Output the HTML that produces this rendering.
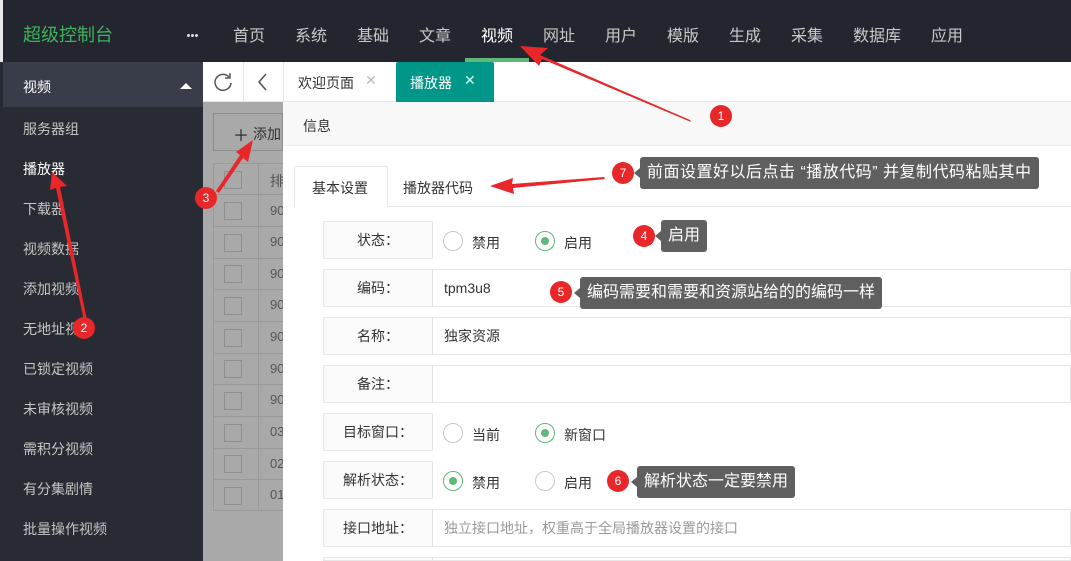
<!DOCTYPE html>
<html style="width:1071px;height:561px;overflow:hidden"><head><meta charset="utf-8"><style>
*{margin:0;padding:0;box-sizing:border-box}
body{width:1071px;height:561px;overflow:hidden;position:relative;background:#fff;font-family:"Liberation Sans","Noto Sans CJK SC",sans-serif;font-size:14px;color:#333}
.a{position:absolute}
.top{left:0;top:0;width:1071px;height:62px;background:#23262e}
.nav{top:22px;color:#c8c8c8;font-size:16px}
.side{left:0;top:62px;width:203px;height:499px;background:#282b33}
.si{left:23px;color:#c5c5c5;font-size:14px}
.gray{left:203px;top:102px;width:80px;height:459px;background:#a9a9a9}
.cb{width:18px;height:18px;border:1px solid #8f8f8f;left:224px}
.rowl{left:213px;width:70px;height:1px;background:#999}
.num{left:270px;color:#555;font-size:13px}
.lab{left:323px;width:110px;height:38px;background:#fafafa;border:1px solid #e6e6e6;text-align:center;line-height:36px;font-size:14px}
.inp{left:432px;width:639px;height:38px;border:1px solid #e6e6e6;border-left:none;line-height:36px;padding-left:12px}
.rad{width:20px;height:20px;border:1px solid #c9c9c9;border-radius:50%;background:#fff}
.rad.on{border-color:#5fb878}
.rad.on:after{content:"";position:absolute;left:5px;top:5px;width:8px;height:8px;border-radius:50%;background:#5fb878}
.badge{width:22px;height:22px;border-radius:50%;background:#e8272a;color:#fff;font-size:12px;text-align:center;line-height:22px}
.tip{background:#5f5f5f;color:#fff;font-size:16px;height:32px;line-height:32px;padding:0 7px;border-radius:3px;white-space:nowrap}
.tip:before{content:"";position:absolute;left:-6px;top:11px;width:0;height:0;border-style:solid;border-color:transparent #5f5f5f transparent transparent;border-width:5px 6px 5px 0}
.dot{width:3px;height:3px;background:#ddd;border-radius:50%;top:34px}
</style></head><body>
<div class="a top"></div>
<div class="a" style="left:0;top:0;width:3px;height:561px;background:#e8e8e8"></div>
<div class="a" style="left:23px;top:21px;color:#3fb25d;font-size:18px">超级控制台</div>
<div class="a dot" style="left:187px"></div><div class="a dot" style="left:191px"></div><div class="a dot" style="left:195px"></div>
<div class="a nav" style="left:233px">首页</div>
<div class="a nav" style="left:295px">系统</div>
<div class="a nav" style="left:357px">基础</div>
<div class="a nav" style="left:419px">文章</div>
<div class="a nav" style="left:481px;color:#fff">视频</div>
<div class="a" style="left:465px;top:58px;width:64px;height:4px;background:#5fb878"></div>
<div class="a nav" style="left:543px">网址</div>
<div class="a nav" style="left:605px">用户</div>
<div class="a nav" style="left:667px">模版</div>
<div class="a nav" style="left:729px">生成</div>
<div class="a nav" style="left:791px">采集</div>
<div class="a nav" style="left:853px">数据库</div>
<div class="a nav" style="left:931px">应用</div>

<div class="a side"></div>
<div class="a" style="left:3px;top:62px;width:200px;height:45px;background:#393d49"></div>
<div class="a si" style="top:77px;color:#fff">视频</div>
<div class="a" style="left:180px;top:83px;width:0;height:0;border-style:solid;border-color:transparent transparent #fff transparent;border-width:0 6px 6px 6px"></div>
<div class="a si" style="top:119px">服务器组</div>
<div class="a si" style="top:159px;color:#fff">播放器</div>
<div class="a si" style="top:199px">下载器</div>
<div class="a si" style="top:239px">视频数据</div>
<div class="a si" style="top:279px">添加视频</div>
<div class="a si" style="top:319px">无地址视频</div>
<div class="a si" style="top:359px">已锁定视频</div>
<div class="a si" style="top:399px">未审核视频</div>
<div class="a si" style="top:439px">需积分视频</div>
<div class="a si" style="top:479px">有分集剧情</div>
<div class="a si" style="top:519px">批量操作视频</div>

<div class="a" style="left:203px;top:62px;width:868px;height:40px;background:#fff;border-bottom:1px solid #e6e6e6"></div>
<div class="a" style="left:243px;top:62px;width:1px;height:40px;background:#e6e6e6"></div>
<div class="a" style="left:283px;top:62px;width:1px;height:40px;background:#e6e6e6"></div>
<svg class="a" style="left:212px;top:71px" width="22" height="22" viewBox="0 0 22 22"><path d="M17 6A8 8 0 1 0 19 12" fill="none" stroke="#555" stroke-width="1.5"/><path d="M18 2v5h-5" fill="none" stroke="#555" stroke-width="1.5"/></svg>
<svg class="a" style="left:255px;top:72px" width="14" height="20"><path d="M11 2L4 10l7 8" fill="none" stroke="#555" stroke-width="1.6"/></svg>
<div class="a" style="left:298px;top:73px;font-size:14px">欢迎页面</div>
<div class="a" style="left:365px;top:72px;color:#bbb;font-size:14px">✕</div>
<div class="a" style="left:396px;top:62px;width:98px;height:40px;background:#009688;border-radius:2px 2px 0 0"></div>
<div class="a" style="left:410px;top:73px;color:#fff">播放器</div>
<div class="a" style="left:464px;top:72px;color:#cfe;font-size:14px">✕</div>

<div class="a gray"></div>
<div class="a" style="left:213px;top:113px;width:70px;height:38px;border:1px solid #8c8c8c"></div>
<div class="a" style="left:233px;top:122px;font-size:16px;color:#222">＋</div>
<div class="a" style="left:253px;top:124px;color:#333">添加</div>
<div class="a" style="left:213px;top:163px;width:70px;height:348px;border-left:1px solid #999"></div>
<div class="a" style="left:258px;top:163px;width:1px;height:348px;background:#999"></div>
<div class="a rowl" style="top:163px"></div>
<div class="a" style="left:270px;top:171px;color:#555">排</div>
<div class="a cb" style="top:171px"></div>
<div class="a rowl" style="top:194px"></div><div class="a cb" style="top:202px"></div><div class="a num" style="top:203px">90</div>
<div class="a rowl" style="top:226px"></div><div class="a cb" style="top:234px"></div><div class="a num" style="top:234px">90</div>
<div class="a rowl" style="top:258px"></div><div class="a cb" style="top:265px"></div><div class="a num" style="top:266px">90</div>
<div class="a rowl" style="top:289px"></div><div class="a cb" style="top:297px"></div><div class="a num" style="top:297px">90</div>
<div class="a rowl" style="top:321px"></div><div class="a cb" style="top:329px"></div><div class="a num" style="top:329px">90</div>
<div class="a rowl" style="top:353px"></div><div class="a cb" style="top:360px"></div><div class="a num" style="top:361px">90</div>
<div class="a rowl" style="top:384px"></div><div class="a cb" style="top:392px"></div><div class="a num" style="top:392px">90</div>
<div class="a rowl" style="top:416px"></div><div class="a cb" style="top:424px"></div><div class="a num" style="top:424px">03</div>
<div class="a rowl" style="top:448px"></div><div class="a cb" style="top:455px"></div><div class="a num" style="top:456px">02</div>
<div class="a rowl" style="top:479px"></div><div class="a cb" style="top:487px"></div><div class="a num" style="top:487px">01</div>
<div class="a rowl" style="top:510px"></div>

<div class="a" style="left:283px;top:102px;width:788px;height:459px;background:#fff"></div>
<div class="a" style="left:283px;top:102px;width:788px;height:44px;background:#f8f8f8;border-bottom:1px solid #eee"></div>
<div class="a" style="left:303px;top:116px">信息</div>
<div class="a" style="left:294px;top:206px;width:777px;height:1px;background:#e6e6e6"></div>
<div class="a" style="left:294px;top:166px;width:94px;height:41px;background:#fff;border:1px solid #e6e6e6;border-bottom:none;border-radius:2px 2px 0 0"></div>
<div class="a" style="left:312px;top:178px">基本设置</div>
<div class="a" style="left:403px;top:178px">播放器代码</div>

<div class="a lab" style="top:221px">状态：</div>
<div class="a rad" style="left:443px;top:231px"></div><div class="a" style="left:472px;top:233px">禁用</div>
<div class="a rad on" style="left:535px;top:231px"></div><div class="a" style="left:564px;top:233px">启用</div>

<div class="a lab" style="top:269px">编码：</div><div class="a inp" style="top:269px">tpm3u8</div>
<div class="a lab" style="top:317px">名称：</div><div class="a inp" style="top:317px">独家资源</div>
<div class="a lab" style="top:365px">备注：</div><div class="a inp" style="top:365px"></div>
<div class="a lab" style="top:413px">目标窗口：</div>
<div class="a rad" style="left:443px;top:423px"></div><div class="a" style="left:472px;top:425px">当前</div>
<div class="a rad on" style="left:535px;top:423px"></div><div class="a" style="left:564px;top:425px">新窗口</div>
<div class="a lab" style="top:461px">解析状态：</div>
<div class="a rad on" style="left:443px;top:471px"></div><div class="a" style="left:472px;top:473px">禁用</div>
<div class="a rad" style="left:535px;top:471px"></div><div class="a" style="left:564px;top:473px">启用</div>
<div class="a lab" style="top:509px">接口地址：</div><div class="a inp" style="top:509px;color:#999">独立接口地址，权重高于全局播放器设置的接口</div>
<div class="a lab" style="top:557px;height:4px"></div><div class="a inp" style="top:557px;height:4px"></div>

<svg class="a" style="left:0;top:0" width="1071" height="561">
<g fill="#e8272a">
<polygon points="690,120 540,55 548,48 520,46 539,66 542,59 691,122"/>
<polygon points="87,320 60,187 67,186 52,172 50,190 56,188 84,321"/>
<polygon points="219,193 243,158 248,162 253,140 236,152 240,155 216,191"/>
<polygon points="604,177 512,184 513,178 490,186 514,194 513,188 605,179"/>
</g>
</svg>
<div class="a badge" style="left:710px;top:105px">1</div>
<div class="a badge" style="left:73px;top:317px">2</div>
<div class="a badge" style="left:195px;top:187px">3</div>
<div class="a badge" style="left:633px;top:225px">4</div>
<div class="a badge" style="left:550px;top:281px">5</div>
<div class="a badge" style="left:607px;top:470px">6</div>
<div class="a badge" style="left:612px;top:162px">7</div>
<div class="a tip" style="left:661px;top:220px">启用</div>
<div class="a tip" style="left:580px;top:277px">编码需要和需要和资源站给的的编码一样</div>
<div class="a tip" style="left:637px;top:466px">解析状态一定要禁用</div>
<div class="a tip" style="left:640px;top:157px;letter-spacing:0.5px">前面设置好以后点击 “播放代码” 并复制代码粘贴其中</div>
</body></html>
